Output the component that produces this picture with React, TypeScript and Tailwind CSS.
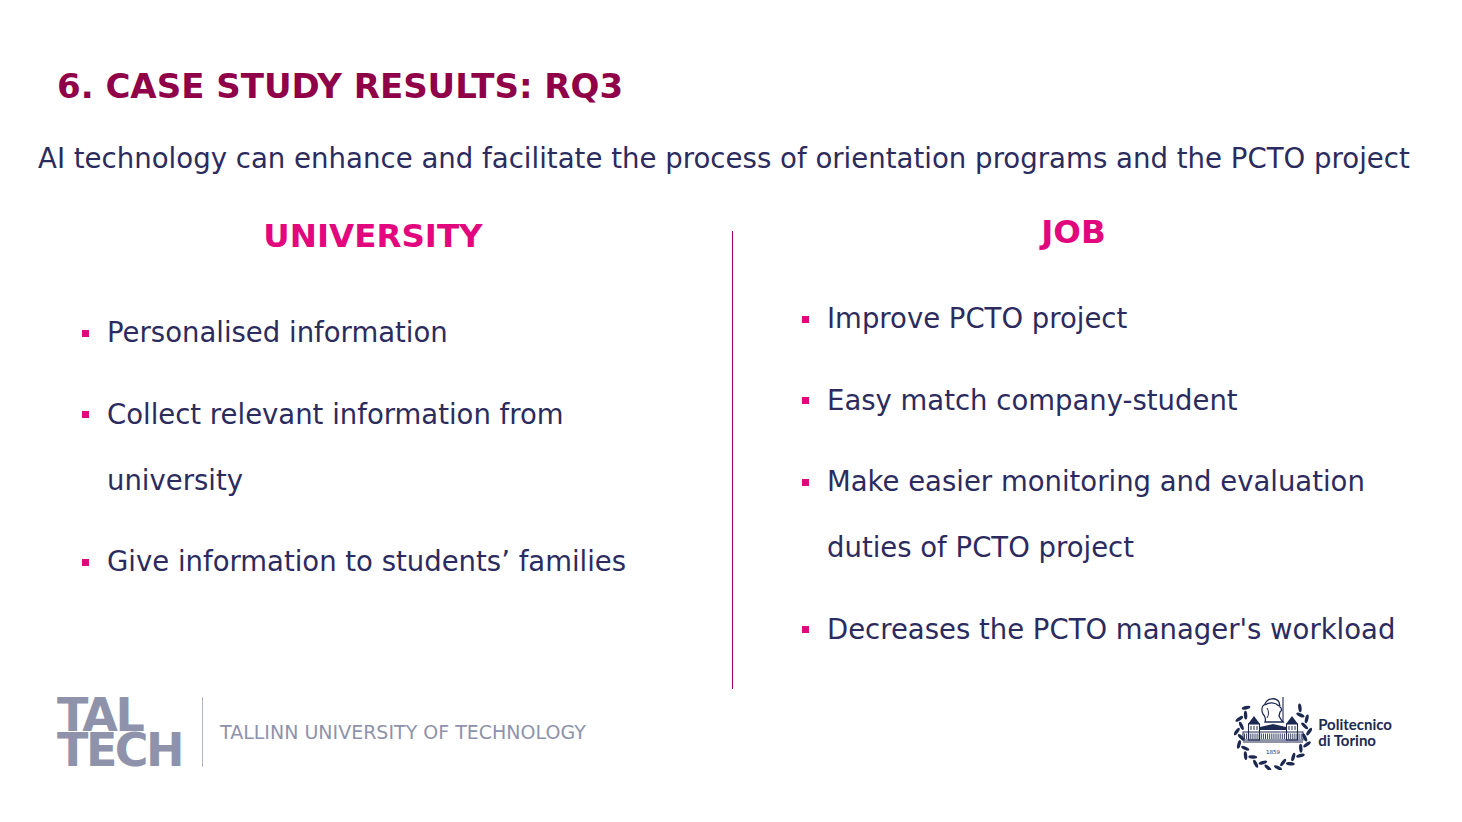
import React from "react";

const ink = "text-[#2c2b5e]";

const universityItems = [
  ["Personalised information"],
  ["Collect relevant information from", "university"],
  ["Give information to students\u2019 families"],
];

const jobItems = [
  ["Improve PCTO project"],
  ["Easy match company-student"],
  ["Make easier monitoring and evaluation", "duties of PCTO project"],
  ["Decreases the PCTO manager's workload"],
];

const Bullet: React.FC<{ lines: string[] }> = ({ lines }) => (
  <li className="flex">
    <span className="flex h-[66px] w-[25px] shrink-0 items-center">
      <span className="mt-[2px] block h-[7px] w-[7px] bg-[#e2077d]" />
    </span>
    <span className={`text-[27.5px] leading-[66px] ${ink}`}>
      {lines.map((l, i) => (
        <React.Fragment key={i}>
          {i > 0 && <br />}
          {l}
        </React.Fragment>
      ))}
    </span>
  </li>
);

// laurel leaves placed around a circle
function leaves(from: number, to: number, count: number) {
  const out: { x: number; y: number; a: number }[] = [];
  for (let i = 0; i < count; i++) {
    const deg = from + ((to - from) * i) / (count - 1);
    const r = (deg * Math.PI) / 180;
    const off = i % 2 === 0 ? 2.2 : -1.8;
    out.push({
      x: 39 + (34 + off) * Math.cos(r),
      y: 38 + (34 + off) * Math.sin(r),
      a: deg + 90 + (i % 2 === 0 ? 35 : -35),
    });
  }
  return out;
}

const PolitoSeal = () => {
  const all = [...leaves(222, 98, 13), ...leaves(-42, 82, 13)];
  return (
    <svg width="78" height="76" viewBox="0 0 78 76" fill="#1e2952">
      {all.map((p, i) => (
        <ellipse
          key={i}
          cx={p.x}
          cy={p.y}
          rx="4.4"
          ry="1.7"
          transform={`rotate(${p.a} ${p.x} ${p.y})`}
        />
      ))}
      {/* head with helmet and spear */}
      <path
        d="M31 10 C33 4 42 3 45 8 L46 13 C48 14 48 17 46 18 L45 22 C46 24 47 26 49 28 L31 28 C32 25 31 22 29 20 C27 16 28 12 31 10 Z"
        fill="none"
        stroke="#1e2952"
        strokeWidth="1.3"
      />
      <path d="M31 11 C35 8 41 8 45 12" fill="none" stroke="#1e2952" strokeWidth="1.2" />
      <path d="M33 14 C35 17 35 21 33 24" fill="none" stroke="#1e2952" strokeWidth="1" />
      <line x1="49" y1="3" x2="49" y2="28" stroke="#1e2952" strokeWidth="1.1" />
      {/* building */}
      <path d="M14 30 L20 22 L26 30 Z" />
      <path d="M52 30 L58 22 L64 30 Z" />
      <rect x="14.5" y="30" width="11" height="16" fill="none" stroke="#1e2952" strokeWidth="1.1" />
      <rect x="52.5" y="30" width="11" height="16" fill="none" stroke="#1e2952" strokeWidth="1.1" />
      {[17, 20, 23, 55, 58, 61].map((x) => (
        <line key={x} x1={x} y1="32" x2={x} y2="36" stroke="#1e2952" strokeWidth="1" />
      ))}
      <path d="M26 33 L39 30 L52 33 L52 36 L26 36 Z" />
      <rect x="9" y="38" width="60" height="8" fill="none" stroke="#1e2952" strokeWidth="1" />
      {Array.from({ length: 28 }).map((_, i) => (
        <line key={i} x1={10.5 + i * 2.1} y1="39.5" x2={10.5 + i * 2.1} y2="45" stroke="#1e2952" strokeWidth="0.9" />
      ))}
      <line x1="9" y1="48" x2="69" y2="48" stroke="#1e2952" strokeWidth="1.2" />
      <text x="39" y="60" textAnchor="middle" fontSize="5.5" fontFamily="'DejaVu Sans', sans-serif">
        1859
      </text>
    </svg>
  );
};

export default function App() {
  return (
    <div className="flex h-[822px] w-[1462px] flex-col bg-white font-['DejaVu_Sans',sans-serif]">
      <h1 className="pl-[57px] pt-[66px] text-[34px] font-bold leading-[40px] text-[#900048]">
        6. CASE STUDY RESULTS: RQ3
      </h1>
      <p className={`mt-[33px] pl-[38px] text-[27.6px] leading-[40px] ${ink}`}>
        AI technology can enhance and facilitate the process of orientation programs and the PCTO project
      </p>

      <div className="mt-[31px] flex">
        <div className="w-[732px]">
          <h2 className="mt-[6px] pl-[14px] text-center text-[32.5px] font-bold leading-[40px] text-[#e2077d]">
            UNIVERSITY
          </h2>
          <ul className="mt-[43px] flex flex-col gap-[15.5px] pl-[82px]">
            {universityItems.map((l, i) => (
              <Bullet key={i} lines={l} />
            ))}
          </ul>
        </div>
        <div className="mt-[21px] h-[458px] w-px bg-[#a3006b]" />
        <div className="flex-1">
          <h2 className="mt-[2px] pr-[48px] text-center text-[32.5px] font-bold leading-[40px] text-[#e2077d]">
            JOB
          </h2>
          <ul className="mt-[33px] flex flex-col gap-[15.5px] pl-[69px]">
            {jobItems.map((l, i) => (
              <Bullet key={i} lines={l} />
            ))}
          </ul>
        </div>
      </div>

      <div className="mt-[5px] flex items-center justify-between pl-[57px] pr-[70px]">
        <div className="flex items-center">
          <div className="text-[46px] font-bold tracking-[-2.5px] text-[#8e93ab]">
            <div className="h-[35px] leading-[36px]">TAL</div>
            <div className="h-[35px] leading-[36px]">TECH</div>
          </div>
          <div className="ml-[20px] h-[70px] w-px bg-[#b3b6c6]" />
          <div className="ml-[17px] text-[19px] text-[#8e93ab]">
            TALLINN UNIVERSITY OF TECHNOLOGY
          </div>
        </div>
        <div className="flex items-center">
          <PolitoSeal />
          <div className="ml-[6px] font-['Lato',sans-serif] text-[15px] font-bold leading-[16px] text-[#1e2952]">
            Politecnico
            <br />
            di Torino
          </div>
        </div>
      </div>
    </div>
  );
}
